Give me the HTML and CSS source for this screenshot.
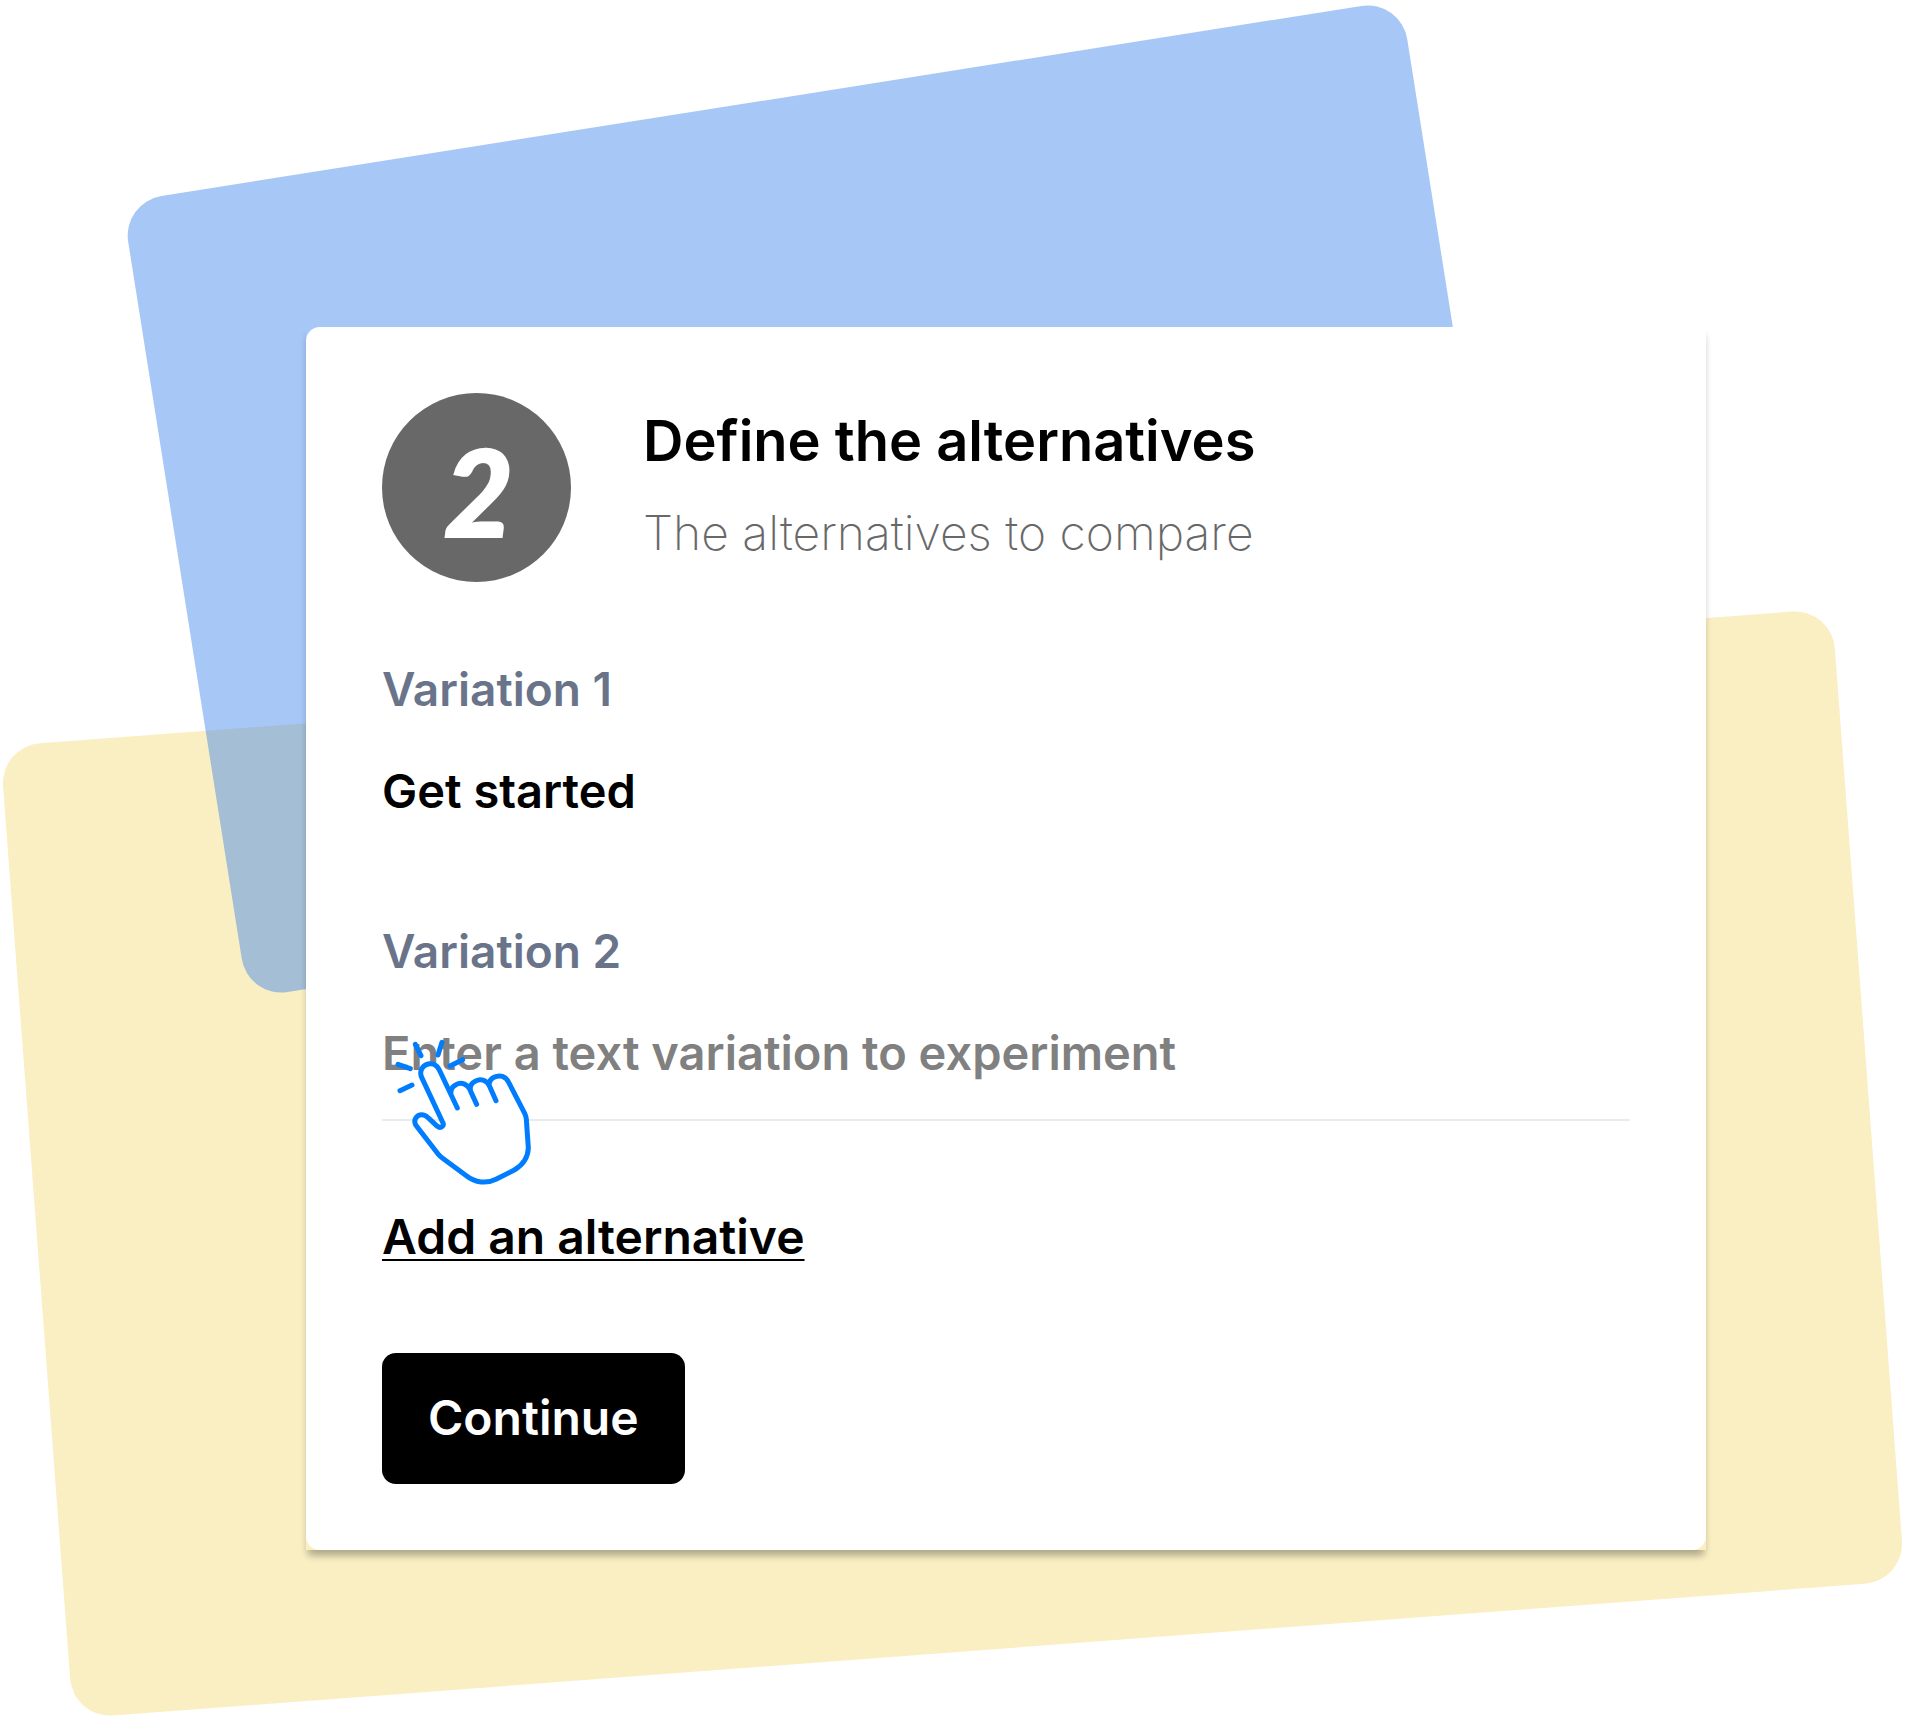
FILE: index.html
```html
<!DOCTYPE html>
<html lang="en">
<head>
<meta charset="utf-8">
<meta name="viewport" content="width=device-width, initial-scale=1">
<title>Define the alternatives</title>
<link rel="stylesheet" href="styles.css">
</head>
<body>
<main class="scene">
  <div class="panel panel-yellow"></div>
  <div class="panel panel-blue"></div>
  <div class="card-shadow">
    <form class="card">
      <header class="step">
        <span class="step-number">2</span>
        <div class="step-text">
          <h1 class="step-title">Define the alternatives</h1>
          <p class="step-subtitle">The alternatives to compare</p>
        </div>
      </header>
      <div class="fields">
        <div class="field">
          <label class="field-label" for="variation-1">Variation 1</label>
          <input class="field-input" id="variation-1" type="text" value="Get started">
        </div>
        <div class="field">
          <label class="field-label" for="variation-2">Variation 2</label>
          <input class="field-input field-input-lined" id="variation-2" type="text" placeholder="Enter a text variation to experiment">
          <svg class="pointer" viewBox="0 0 600 540" aria-hidden="true">
            <path class="pointer-hand" d="M262 264L208 150C200 133 186 129 174 132C157 137 148 152 154 170L219 309C223 319 211 326 202 319L174 293C162 281 146 282 138 293C132 302 134 311 140 319L206 404Q211 410 218 415L290 468C315 488 350 492 378 478L433 450C460 434 474 412 475 384L469 298Q468 289 464 280L416 187C408 169 389 163 372 172C361 178 356 186 358 197L378 242L358 197C349 179 331 175 315 184C302 191 298 200 302 214L320 253L302 214C295 192 274 185 258 194C246 200 241 208 243 222"/>
            <path class="pointer-rays" d="M136 73L153 107M216 67L204 105M84 133L121 146M90 212L126 195M240 138L278 119"/>
          </svg>
        </div>
      </div>
      <a class="add-link" href="#">Add an alternative</a>
      <button class="continue" type="button">Continue</button>
    </form>
  </div>
</main>
</body>
</html>
```
FILE: styles.css
```css
* {
  box-sizing: border-box;
}

body {
  margin: 0;
  background: #fff;
  color: #000;
  font-family: Inter, "Liberation Sans", sans-serif;
}

.scene {
  position: relative;
  overflow: hidden;
  min-height: 100vh;
  padding: 327px 200px 169px 306px;
}

/* Tilted colour panels behind the card */
.panel {
  position: absolute;
  border-radius: 40px;
}

.panel-yellow {
  inset: 676px 35px 68px 34px;
  background: #faefc3;
  transform: rotate(-4.3deg);
}

.panel-blue {
  top: 96px;
  left: 177px;
  right: 434px;
  height: 806px;
  background: rgba(60, 131, 235, 0.45);
  transform: rotate(-9deg);
}

.card-shadow {
  position: relative;
  box-shadow: 0 8px 8px -3px rgba(0, 0, 0, 0.26), 0 6px 6px rgba(0, 0, 0, 0.08);
}

.card {
  display: flex;
  flex-direction: column;
  align-items: flex-start;
  padding: 66px 76px;
  border-radius: 14px;
  background: #fff;
}

.step {
  display: flex;
  align-items: center;
  gap: 72px;
  margin-bottom: 79px;
}

.step-number {
  display: flex;
  align-items: center;
  justify-content: center;
  flex: none;
  width: 189px;
  height: 189px;
  padding: 6px 0 0 4px;
  border-radius: 50%;
  background: #686868;
  color: #fff;
  font: italic 900 120px/120px Lato, sans-serif;
  -webkit-text-stroke: 2px #fff;
}

.step-text {
  padding-bottom: 4px;
}

.step-title,
.step-subtitle {
  margin: 0;
}

.step-title {
  margin-bottom: 34px;
  font-size: 56px;
  font-weight: 600;
  line-height: 60px;
}

.step-subtitle {
  color: #686868;
  font-size: 48px;
  font-weight: 200;
  line-height: 56px;
}

.fields {
  display: flex;
  flex-direction: column;
  gap: 64px;
  align-self: stretch;
}

.field {
  position: relative;
  display: flex;
  flex-direction: column;
  gap: 45px;
}

.field-label,
.field-input {
  font-family: inherit;
  font-size: 47px;
  font-weight: 600;
  line-height: 56px;
}

.field-label {
  color: #69748a;
  font-size: 46px;
}

.field-input {
  width: 100%;
  height: 97px;
  padding: 0 0 39px;
  border: 0;
  border-bottom: 2px solid transparent;
  outline: 0;
  background: transparent;
  color: #000;
}

.field-input::placeholder {
  color: #808080;
  opacity: 1;
}

.field-input-lined {
  border-bottom-color: #e8ebf0;
}

.pointer {
  position: absolute;
  left: -12px;
  bottom: -79px;
  width: 200px;
  height: 180px;
  fill: none;
  stroke: #007dff;
  stroke-width: 15;
  stroke-linecap: round;
  stroke-linejoin: round;
  pointer-events: none;
}

.pointer-hand {
  fill: #fff;
}

.add-link,
.continue {
  font-family: inherit;
  font-size: 48px;
  font-weight: 600;
  line-height: 56px;
}

.add-link {
  margin: 88px 0;
  color: #000;
  text-decoration: underline 2px;
  text-decoration-skip-ink: none;
  text-underline-offset: 5px;
}

.continue {
  padding: 37px 46px 38px;
  border: 0;
  border-radius: 14px;
  background: #000;
  color: #fff;
}
```
